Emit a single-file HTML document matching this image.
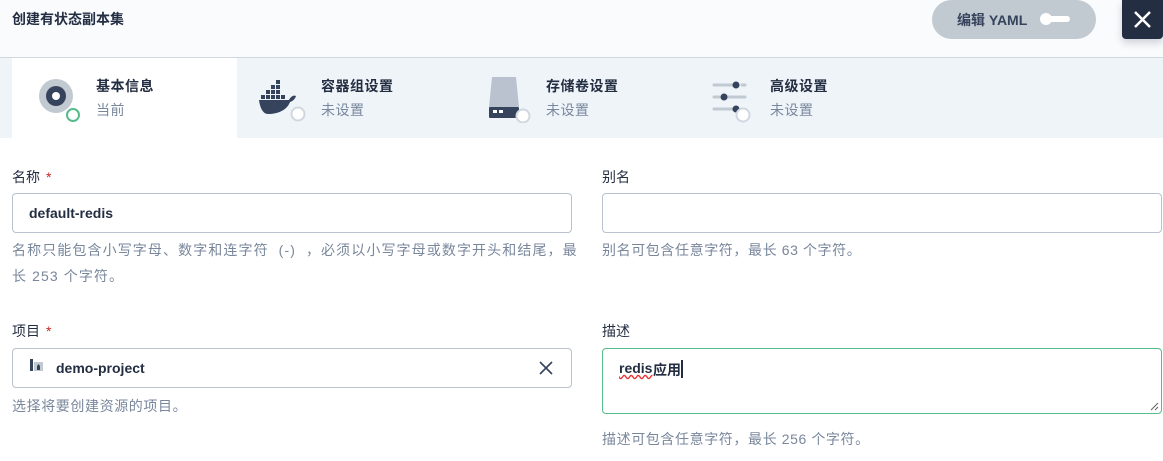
<!DOCTYPE html>
<html><head><meta charset="utf-8"><style>
*{box-sizing:border-box;margin:0;padding:0}
body{width:1163px;height:461px;overflow:hidden;background:#fff;font-family:"Liberation Sans","Noto Sans CJK SC",sans-serif;color:#242e42;position:relative}
.hdr{position:absolute;left:0;top:0;width:1163px;height:58px;background:#f9fbfd;border-bottom:1px solid #d1d7e0}
.title{position:absolute;left:12px;top:9px;font-size:14px;font-weight:bold;color:#242e42}
.yaml{position:absolute;left:932px;top:0;width:164px;height:39px;background:#c1c9d1;border-radius:20px;font-size:14px;font-weight:bold;color:#36435c}
.yaml span{position:absolute;left:25px;top:10px}
.tog{position:absolute;left:108px;top:13px;width:30px;height:12px}
.close{position:absolute;left:1122px;top:0;width:41px;height:39px;background:#242e42;border-radius:0 0 4px 4px;box-shadow:0 4px 8px rgba(36,46,66,.2)}
.tabs{position:absolute;left:0;top:58px;width:1163px;height:80px;background:#eff4f9}
.act{position:absolute;left:12px;top:0;width:225px;height:80px;background:#fff}
.tab{position:absolute;top:0;height:80px}
.tab .n{position:absolute;top:18px;font-size:14px;font-weight:bold;color:#242e42;white-space:nowrap;letter-spacing:.5px}
.tab .s{position:absolute;top:42px;font-size:14px;color:#79879c;white-space:nowrap;letter-spacing:.5px}
.lbl{position:absolute;font-size:14px;color:#242e42}
.lbl b{color:#ca2621;font-weight:normal;margin-left:6px}
.inp{position:absolute;height:40px;border:1px solid #b9c2ce;border-radius:4px;background:#fff;font-size:14px;font-weight:bold;color:#242e42}
.help{position:absolute;font-size:14px;color:#79879c;line-height:26px;white-space:nowrap;letter-spacing:.6px}
</style></head><body>
<div class="hdr"><div class="title">创建有状态副本集</div></div>
<div class="yaml"><span>编辑 YAML</span><svg class="tog" viewBox="0 0 30 12"><rect x="4" y="3" width="26" height="6" rx="3" fill="#fff"/><circle cx="6" cy="6" r="6" fill="#fff"/></svg></div>
<div class="close"><svg width="41" height="39" viewBox="0 0 41 39"><path d="M13 12L28 27M28 12L13 27" stroke="#fff" stroke-width="2.5"/></svg></div>
<div class="tabs">
<div class="act"></div>
<div class="tab" style="left:36px;width:200px">
<svg width="46" height="46" viewBox="0 0 46 46" style="position:absolute;left:0;top:20px"><circle cx="20" cy="18" r="17" fill="#c1c9d1"/><circle cx="20" cy="18" r="10" fill="#36435c"/><circle cx="20" cy="18" r="4" fill="#fff"/><circle cx="37" cy="37" r="6" fill="#fff" stroke="#55bc8a" stroke-width="2"/></svg>
<div class="n" style="left:60px">基本信息</div><div class="s" style="left:60px">当前</div></div>
<div class="tab" style="left:259px;width:200px">
<svg width="50" height="46" viewBox="0 0 50 46" style="position:absolute;left:0;top:22px"><g fill="#36435c"><rect x="7" y="10" width="4" height="4"/><rect x="12" y="10" width="4" height="4"/><rect x="17" y="10" width="4" height="4"/><rect x="12" y="5" width="4" height="4"/><rect x="17" y="5" width="4" height="4"/><rect x="17" y="0" width="4" height="4"/><rect x="2" y="15" width="4" height="4"/><rect x="7" y="15" width="4" height="4"/><rect x="12" y="15" width="4" height="4"/><rect x="17" y="15" width="4" height="4"/><rect x="22" y="15" width="4" height="4"/><path d="M0 20h30c2-4 5-5 7-4c-1 3-3 5-6 6c-3 8-12 12-22 12C4 34 1 28 0 20z"/></g><circle cx="39" cy="34" r="6.5" fill="#fff" stroke="#d1d7e0" stroke-width="2"/></svg>
<div class="n" style="left:62px">容器组设置</div><div class="s" style="left:62px">未设置</div></div>
<div class="tab" style="left:488px;width:200px">
<svg width="46" height="46" viewBox="0 0 46 46" style="position:absolute;left:0;top:19px"><path d="M4 0h24l3 30H1z" fill="#b9c2ce"/><rect x="1" y="30" width="30" height="11" rx="1" fill="#36435c"/><rect x="5" y="33" width="4" height="3" fill="#fff"/><rect x="11" y="33" width="4" height="3" fill="#fff"/><circle cx="35" cy="39" r="6.5" fill="#fff" stroke="#d1d7e0" stroke-width="2"/></svg>
<div class="n" style="left:58px">存储卷设置</div><div class="s" style="left:58px">未设置</div></div>
<div class="tab" style="left:712px;width:200px">
<svg width="46" height="46" viewBox="0 0 46 46" style="position:absolute;left:0;top:21px"><g stroke="#c1c9d1" stroke-width="3" stroke-linecap="round"><path d="M2 6h20M30 6h3M2 18h5M15 18h18M2 30h20"/></g><g fill="#36435c"><circle cx="24" cy="6" r="3.5"/><circle cx="12" cy="18" r="3.5"/><circle cx="24" cy="30" r="3.5"/></g><circle cx="31" cy="36" r="6.5" fill="#fff" stroke="#d1d7e0" stroke-width="2"/></svg>
<div class="n" style="left:58px">高级设置</div><div class="s" style="left:58px">未设置</div></div>
</div>

<div class="lbl" style="left:12px;top:167px">名称<b>*</b></div>
<div class="inp" style="left:12px;top:193px;width:560px"><span style="position:absolute;left:16px;top:11px">default-redis</span></div>
<div class="help" style="left:12px;top:237px;letter-spacing:1.1px">名称只能包含小写字母、数字和连字符 &nbsp;(-) &nbsp;，必须以小写字母或数字开头和结尾，最<br>长 253 个字符。</div>

<div class="lbl" style="left:602px;top:167px">别名</div>
<div class="inp" style="left:602px;top:193px;width:560px"></div>
<div class="help" style="left:602px;top:237px">别名可包含任意字符，最长 63 个字符。</div>

<div class="lbl" style="left:12px;top:321px">项目<b>*</b></div>
<div class="inp" style="left:12px;top:348px;width:560px">
<svg width="14" height="14" viewBox="0 0 14 14" style="position:absolute;left:17px;top:10px"><rect x="0" y="0" width="3" height="12" fill="#36435c"/><rect x="4" y="3" width="9" height="9" fill="#c1c9d1"/><path d="M7 11V7l1.5-2L10 7v4z" fill="#36435c"/></svg>
<span style="position:absolute;left:43px;top:11px">demo-project</span>
<svg width="14" height="14" viewBox="0 0 14 14" style="position:absolute;left:526px;top:12px"><path d="M1 1L13 13M13 1L1 13" stroke="#36435c" stroke-width="1.6"/></svg></div>
<div class="help" style="left:12px;top:393px">选择将要创建资源的项目。</div>

<div class="lbl" style="left:602px;top:321px">描述</div>
<div class="inp" style="left:602px;top:348px;width:560px;height:66px;border-color:#55bc8a"><span style="position:absolute;left:16px;top:11px;text-decoration:underline wavy #e33;text-decoration-skip-ink:none">redis</span><span style="position:absolute;left:50px;top:11px">应用</span><span style="position:absolute;left:78px;top:11px;width:2px;height:18px;background:#242e42"></span>
<svg width="10" height="10" viewBox="0 0 10 10" style="position:absolute;right:2px;bottom:2px"><path d="M9 2L2 9M9 6L6 9" stroke="#666" stroke-width="1"/></svg></div>
<div class="help" style="left:602px;top:426px">描述可包含任意字符，最长 256 个字符。</div>
</body></html>
